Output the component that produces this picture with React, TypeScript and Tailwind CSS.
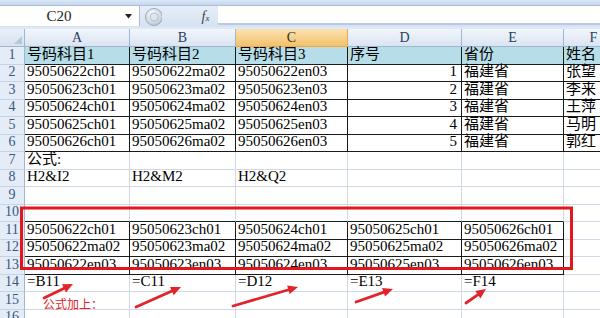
import React from "react";

const FONT = "font-['Liberation_Serif','Noto_Sans_CJK_SC',serif]";

type Cell = { t?: string; right?: boolean };

const colW = [105, 106, 112, 114, 102, 60];
const colLetters = ["A", "B", "C", "D", "E", "F"];
const names = ["张望", "李来", "王萍", "马明", "郭红"];

function buildRows(): Cell[][] {
  const rows: Cell[][] = [];
  rows.push([{ t: "号码科目1" }, { t: "号码科目2" }, { t: "号码科目3" }, { t: "序号" }, { t: "省份" }, { t: "姓名" }]);
  for (let i = 0; i < 5; i++) {
    const n = 22 + i;
    rows.push([
      { t: `950506${n}ch01` },
      { t: `950506${n}ma02` },
      { t: `950506${n}en03` },
      { t: String(i + 1), right: true },
      { t: "福建省" },
      { t: names[i] },
    ]);
  }
  rows.push([{ t: "公式:" }, {}, {}, {}, {}, {}]);
  rows.push([{ t: "H2&I2" }, { t: "H2&M2" }, { t: "H2&Q2" }, {}, {}, {}]);
  rows.push([{}, {}, {}, {}, {}, {}]);
  rows.push([{}, {}, {}, {}, {}, {}]);
  const suf = ["ch01", "ma02", "en03"];
  for (const s of suf) {
    rows.push([22, 23, 24, 25, 26].map((n) => ({ t: `950506${n}${s}` })).concat([{}]));
  }
  rows.push([{ t: "=B11" }, { t: "=C11" }, { t: "=D12" }, { t: "=E13" }, { t: "=F14" }, {}]);
  rows.push([{}, {}, {}, {}, {}, {}]);
  rows.push([{}, {}, {}, {}, {}, {}]);
  return rows;
}

function Arrow({ x1, y1, x2, y2 }: { x1: number; y1: number; x2: number; y2: number }) {
  const dx = x2 - x1;
  const dy = y2 - y1;
  const len = Math.sqrt(dx * dx + dy * dy);
  const ux = dx / len;
  const uy = dy / len;
  const hl = 10;
  const hw = 4.5;
  const bx = x2 - ux * hl;
  const by = y2 - uy * hl;
  const p1 = `${x2},${y2}`;
  const p2 = `${bx - uy * hw},${by + ux * hw}`;
  const p3 = `${bx + uy * hw},${by - ux * hw}`;
  return (
    <g>
      <line x1={x1} y1={y1} x2={bx + ux * 2} y2={by + uy * 2} stroke="#e3232b" strokeWidth={2.8} strokeLinecap="round" />
      <polygon points={`${p1} ${p2} ${p3}`} fill="#e3232b" />
    </g>
  );
}

export default function App() {
  const rows = buildRows();
  return (
    <div className={`relative w-[600px] h-[318px] overflow-hidden bg-white ${FONT}`}>
      {/* ribbon bottom band */}
      <div className="h-[6px] bg-gradient-to-b from-[#dbe7f5] to-[#c4d6ee] border-b border-[#a9c0de]" />
      {/* formula bar */}
      <div className="flex h-[21px] bg-gradient-to-b from-[#e6eef9] to-[#d6e2f2]">
        <div className="flex w-[140px] h-[20px] bg-white border-r border-[#a9bdd6]">
          <div className="w-[118px] flex items-center justify-center text-[15px] text-[#222] leading-none pt-[1px]">C20</div>
          <div className="flex-1 flex items-center justify-center">
            <svg width="7" height="5" viewBox="0 0 7 5">
              <polygon points="0,0 7,0 3.5,4.5" fill="#222" />
            </svg>
          </div>
        </div>
        <div className="w-[78px] flex items-center">
          <svg width="20" height="20" viewBox="0 0 20 20" className="ml-[2px]">
            <defs>
              <radialGradient id="g1" cx="0.4" cy="0.35" r="0.7">
                <stop offset="0" stopColor="#ffffff" />
                <stop offset="1" stopColor="#b9c4d2" />
              </radialGradient>
            </defs>
            <circle cx="12" cy="10" r="8.5" fill="url(#g1)" stroke="#9aa9bd" strokeWidth="1" />
            <circle cx="12" cy="10" r="4" fill="#dfe5ee" stroke="#aab6c6" strokeWidth="0.8" />
          </svg>
          <div className="ml-auto mr-[4px] w-[17px] h-[17px] flex items-center justify-center text-[#444] italic text-[14px] leading-none">
            <span>f</span>
            <span className="text-[9px] mt-[4px]">x</span>
          </div>
        </div>
        <div className="flex-1 h-[19px] bg-white border-b-[2px] border-[#b7cae3]" />
      </div>
      <div className="h-[2px] bg-[#dfe8f4]" />
      {/* sheet */}
      <div className="flex flex-col">
        {/* column header */}
        <div className="flex h-[18px]">
          <div className="relative w-[25px] shrink-0 bg-gradient-to-b from-[#e9f0f9] to-[#d7e2f0] border-r border-b border-[#9eb6ce]">
            <svg width="8" height="8" viewBox="0 0 8 8" className="absolute right-[2px] bottom-[2px]">
              <polygon points="8,0 8,8 0,8" fill="#b8c6d8" />
            </svg>
          </div>
          {colLetters.map((c, i) => (
            <div
              key={c}
              style={{ width: colW[i] }}
              className={`shrink-0 flex items-center justify-center text-[14px] leading-none border-r border-b ${
                c === "C"
                  ? "bg-gradient-to-b from-[#fbe2b0] to-[#f2c16a] border-[#f0a93c] text-[#3a3020]"
                  : "bg-gradient-to-b from-[#f2f6fc] to-[#dae4f1] border-[#9eb6ce] text-[#27415f]"
              }`}
            >
              {c}
            </div>
          ))}
        </div>
        {rows.map((r, ri) => {
          const rn = ri + 1;
          return (
            <div key={rn} className="flex h-[17.5px]">
              <div className="w-[25px] shrink-0 flex items-center justify-center bg-[#e4ecf7] border-r border-b border-r-[#9eb6ce] border-b-[#c5d3e5] text-[14px] leading-none text-[#38587e] pb-[1px]">
                {rn}
              </div>
              {r.map((cell, ci) => {
                const inTop = rn >= 1 && rn <= 6;
                const inBot = rn >= 11 && rn <= 13 && ci <= 4;
                const blackB = inTop || inBot || (rn === 10 && ci <= 4);
                const blackR = inTop || inBot;
                return (
                  <div
                    key={ci}
                    style={{ width: colW[ci] }}
                    className={`shrink-0 flex items-center overflow-visible whitespace-nowrap text-[15px] leading-none text-black border-r border-b pb-[2px] ${
                      cell.right ? "justify-end pr-[4px]" : "pl-[2px]"
                    } ${blackR ? "border-r-[#1a1a1a]" : "border-r-[#d0d7e5]"} ${
                      blackB ? "border-b-[#1a1a1a]" : "border-b-[#d0d7e5]"
                    } ${rn === 1 ? "bg-[#b7dee8]" : ""}`}
                  >
                    {cell.t ?? ""}
                  </div>
                );
              })}
            </div>
          );
        })}
      </div>
      {/* annotations */}
      <svg className="absolute left-0 top-0 pointer-events-none" width="600" height="318" viewBox="0 0 600 318">
        <rect x="21.5" y="208" width="550" height="60.5" fill="none" stroke="#e3161d" strokeWidth="3" />
        <Arrow x1={44} y1={298} x2={73} y2={284} />
        <Arrow x1={136} y1={307} x2={181} y2={287} />
        <Arrow x1={233} y1={306} x2={298} y2={287} />
        <Arrow x1={356} y1={302} x2={393} y2={289} />
        <Arrow x1={466} y1={303} x2={486} y2={289} />
      </svg>
      <div className="absolute left-[43px] top-[298px] text-[12px] leading-none text-[#e3232b] font-['Noto_Sans_CJK_SC',sans-serif]">
        公式加上：
      </div>
    </div>
  );
}
